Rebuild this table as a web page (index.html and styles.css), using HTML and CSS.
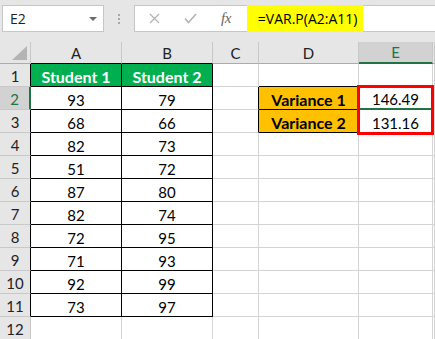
FILE: index.html
```html
<!DOCTYPE html>
<html>
<head>
<meta charset="utf-8">
<link rel="stylesheet" href="styles.css">
</head>
<body>
<div class="toolbar">
  <div class="namebox"><span>E2</span><span class="caret"></span></div>
  <div class="grip"><i></i><i></i><i></i></div>
  <div class="fbar">
    <svg class="ico icox" width="11" height="11" viewBox="0 0 11 11"><path d="M1 1 L10 10 M10 1 L1 10" stroke="#b3b3b3" stroke-width="1.3" fill="none"/></svg>
    <svg class="ico icock" width="13" height="11" viewBox="0 0 13 11"><path d="M1 5.5 L4.5 9.5 L12 1" stroke="#b3b3b3" stroke-width="1.6" fill="none"/></svg>
    <span class="fx">fx</span>
    <span class="formula">=VAR.P(A2:A11)</span>
  </div>
</div>
<div class="sheet">
  <div class="c hd corner"><span class="tri"></span></div>
  <div class="c hd tb">A</div>
  <div class="c hd tb">B</div>
  <div class="c hd">C</div>
  <div class="c hd">D</div>
  <div class="c hd sel">E</div>
  <div class="c hd"></div>

  <div class="c rh tl">1</div>
  <div class="c t g">Student 1</div>
  <div class="c t g">Student 2</div>
  <div class="c"></div>
  <div class="c bb"></div>
  <div class="c"></div>
  <div class="c"></div>

  <div class="c rh tl rsel">2</div>
  <div class="c t">93</div>
  <div class="c t">79</div>
  <div class="c br"></div>
  <div class="c o">Variance 1</div>
  <div class="c act">146.49</div>
  <div class="c"></div>

  <div class="c rh tl">3</div>
  <div class="c t">68</div>
  <div class="c t">66</div>
  <div class="c br"></div>
  <div class="c o">Variance 2</div>
  <div class="c">131.16</div>
  <div class="c"></div>

  <div class="c rh tl">4</div>
  <div class="c t">82</div>
  <div class="c t">73</div>
  <div class="c"></div><div class="c"></div><div class="c"></div><div class="c"></div>

  <div class="c rh tl">5</div>
  <div class="c t">51</div>
  <div class="c t">72</div>
  <div class="c"></div><div class="c"></div><div class="c"></div><div class="c"></div>

  <div class="c rh tl">6</div>
  <div class="c t">87</div>
  <div class="c t">80</div>
  <div class="c"></div><div class="c"></div><div class="c"></div><div class="c"></div>

  <div class="c rh tl">7</div>
  <div class="c t">82</div>
  <div class="c t">74</div>
  <div class="c"></div><div class="c"></div><div class="c"></div><div class="c"></div>

  <div class="c rh tl">8</div>
  <div class="c t">72</div>
  <div class="c t">95</div>
  <div class="c"></div><div class="c"></div><div class="c"></div><div class="c"></div>

  <div class="c rh tl">9</div>
  <div class="c t">71</div>
  <div class="c t">93</div>
  <div class="c"></div><div class="c"></div><div class="c"></div><div class="c"></div>

  <div class="c rh tl">10</div>
  <div class="c t">92</div>
  <div class="c t">99</div>
  <div class="c"></div><div class="c"></div><div class="c"></div><div class="c"></div>

  <div class="c rh tl">11</div>
  <div class="c t">73</div>
  <div class="c t">97</div>
  <div class="c"></div><div class="c"></div><div class="c"></div><div class="c"></div>

  <div class="c rh">12</div>
  <div class="c"></div><div class="c"></div><div class="c"></div><div class="c"></div><div class="c"></div><div class="c"></div>

  <div class="redbox"></div>
</div>
</body>
</html>
```
FILE: styles.css
```css
html, body {
  margin: 0;
  padding: 0;
}
body {
  width: 435px;
  height: 339px;
  overflow: hidden;
  background: #ffffff;
  font-family: Lato, "Liberation Sans", sans-serif;
  color: #000;
}

.toolbar {
  height: 42px;
  box-sizing: border-box;
  background: #e6e6e6;
  display: flex;
  align-items: flex-start;
  padding: 5px 0 0 2px;
}
.namebox {
  width: 102px;
  height: 27px;
  box-sizing: border-box;
  background: #fff;
  border: 1px solid #c6c6c6;
  display: flex;
  align-items: center;
  justify-content: space-between;
  padding: 0 6px 0 7px;
  font: 14px "Open Sans", sans-serif;
  color: #222;
}
.caret {
  width: 0;
  height: 0;
  border-left: 4px solid transparent;
  border-right: 4px solid transparent;
  border-top: 4px solid #6b6b6b;
}
.grip {
  width: 30px;
  height: 27px;
  display: flex;
  flex-direction: column;
  align-items: center;
  justify-content: center;
  gap: 2px;
}
.grip i {
  display: block;
  width: 2px;
  height: 2px;
  background: #a8a8a8;
}
.fbar {
  flex: 1;
  height: 27px;
  box-sizing: border-box;
  background: #fff;
  border: 1px solid #c6c6c6;
  border-right: none;
  display: flex;
  align-items: center;
}
.ico {
  display: block;
}
.icox {
  margin-left: 14px;
}
.icock {
  margin-left: 24px;
}
.fx {
  margin-left: 24px;
  font: italic 15px "Liberation Serif", serif;
  color: #666;
  letter-spacing: -0.5px;
}
.formula {
  margin-left: 16px;
  align-self: stretch;
  margin-top: -1px;
  margin-bottom: -1px;
  width: 116px;
  box-sizing: border-box;
  padding-left: 11px;
  background: #ffff00;
  display: flex;
  align-items: center;
  font: 14px "Open Sans", sans-serif;
  color: #000;
}

.sheet {
  position: relative;
  display: grid;
  grid-template-columns: 31px 91px 91px 46px 100px 74px 2px;
  grid-template-rows: 22px repeat(12, 23px);
}
.c {
  box-sizing: border-box;
  border-right: 1px solid #d4d4d4;
  border-bottom: 1px solid #d4d4d4;
  display: flex;
  align-items: flex-end;
  justify-content: center;
  font-size: 15px;
  line-height: 18px;
  white-space: nowrap;
  overflow: hidden;
}
.hd {
  background: #e6e6e6;
  border-right-color: #c8c8c8;
  border-bottom-color: #ababab;
  align-items: center;
  color: #222;
}
.hd.tb {
  border-bottom-color: #000;
}
.hd.sel {
  background: #d2d2d2;
  border-bottom: 2px solid #217346;
  color: #217346;
}
.corner {
  position: relative;
}
.tri {
  position: absolute;
  right: 3px;
  bottom: 3px;
  width: 0;
  height: 0;
  border-left: 15px solid transparent;
  border-bottom: 14px solid #b4b4b4;
}
.rh {
  background: #e6e6e6;
  border-right-color: #c8c8c8;
  border-bottom-color: #c8c8c8;
  align-items: center;
  color: #222;
  padding-top: 1px;
}
.rh.tl {
  border-right-color: #000;
}
.rh.rsel {
  background: #d2d2d2;
  border-right: 2px solid #217346;
  color: #217346;
}
.t {
  border-right-color: #000;
  border-bottom-color: #000;
}
.g {
  background: #00b050;
  color: #fff;
  font-weight: 700;
  font-size: 16px;
}
.bb {
  border-bottom-color: #000;
}
.br {
  border-right-color: #000;
}
.o {
  background: #ffc000;
  border-right-color: #000;
  border-bottom-color: #000;
  font-weight: 700;
  font-size: 16px;
}
.act {
  border-bottom: 2px solid #217346;
}
.redbox {
  position: absolute;
  left: 357px;
  top: 43px;
  width: 77px;
  height: 50px;
  box-sizing: border-box;
  border: 3px solid #ff0000;
}
```
